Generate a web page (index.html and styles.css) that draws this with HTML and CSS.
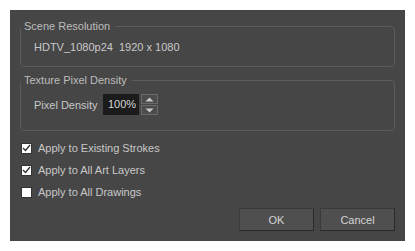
FILE: index.html
```html
<!DOCTYPE html>
<html lang="en">
<head>
  <meta charset="UTF-8" />
  <title>Texture Pixel Density</title>
  <link rel="stylesheet" href="styles.css">
</head>
<body>

  <div class="dialog">
    <fieldset class="group res-group">
      <legend>Scene Resolution</legend>
      <div class="res-value">HDTV_1080p24&nbsp;&nbsp;1920 x 1080</div>
    </fieldset>

    <fieldset class="group density-group">
      <legend>Texture Pixel Density</legend>
      <div class="density-row">
        <span class="density-label">Pixel Density</span>
        <span class="spin-input">100%</span>
        <span class="spin-buttons">
          <span class="spin-btn">
            <svg width="9" height="5" viewBox="0 0 9 5"><polygon points="0.5,4.5 4.5,0.5 8.5,4.5" fill="#c8c8c8"/></svg>
          </span>
          <span class="spin-btn">
            <svg width="9" height="5" viewBox="0 0 9 5"><polygon points="0.5,0.5 8.5,0.5 4.5,4.5" fill="#c8c8c8"/></svg>
          </span>
        </span>
      </div>
    </fieldset>

    <div class="options">
      <label class="check-row">
        <span class="check-box">
          <svg width="9" height="8" viewBox="0 0 9 8"><polyline points="1,4 3.5,6.5 8,1" fill="none" stroke="#2a2a2a" stroke-width="1.2"/></svg>
        </span>
        Apply to Existing Strokes
      </label>
      <label class="check-row">
        <span class="check-box">
          <svg width="9" height="8" viewBox="0 0 9 8"><polyline points="1,4 3.5,6.5 8,1" fill="none" stroke="#2a2a2a" stroke-width="1.2"/></svg>
        </span>
        Apply to All Art Layers
      </label>
      <label class="check-row">
        <span class="check-box"></span>
        Apply to All Drawings
      </label>
    </div>

    <div class="actions">
      <button type="button">OK</button>
      <button type="button">Cancel</button>
    </div>
  </div>

</body>
</html>
```

FILE: styles.css
```css
body {
  margin: 0;
  padding: 10px;
  background-color: #ffffff;
  font-family: "Liberation Sans", Arial, sans-serif;
  font-size: 11px;
}

.dialog {
  width: 395px;
  height: 231px;
  box-sizing: border-box;
  background-color: #464646;
  color: #c4c4c4;
  padding: 10px 10px 10px 10px;
  display: flex;
  flex-direction: column;
}

.group {
  margin: 0;
  border: 1px solid #5b5b5b;
  border-radius: 4px;
  min-width: 0;
}

.group legend {
  padding: 0 5px 0 3px;
  margin-left: -13px;
  line-height: 13px;
  color: #bdbdbd;
}

.res-group {
  padding: 8px 13px 12px 13px;
}

.res-value {
  line-height: 13px;
  color: #c8c8c8;
}

.density-group {
  margin-top: 7px;
  padding: 7px 13px 15px 13px;
}

.density-row {
  display: flex;
  align-items: center;
  height: 21px;
}

.density-label {
  width: 69px;
  white-space: nowrap;
  color: #c8c8c8;
}

.spin-input {
  width: 36px;
  height: 21px;
  box-sizing: border-box;
  background-color: #1b1b1b;
  color: #d6d6d6;
  padding-left: 5px;
  line-height: 21px;
}

.spin-buttons {
  display: flex;
  flex-direction: column;
  gap: 1px;
  margin-left: 2px;
}

.spin-btn {
  width: 17px;
  height: 10px;
  box-sizing: border-box;
  background-color: #4c4c4c;
  border: 1px solid #6a6a6a;
  display: flex;
  align-items: center;
  justify-content: center;
}

.options {
  margin-top: 6px;
  display: flex;
  flex-direction: column;
}

.check-row {
  display: flex;
  align-items: center;
  height: 22px;
  padding-left: 1px;
  color: #c8c8c8;
}

.check-box {
  width: 11px;
  height: 11px;
  box-sizing: border-box;
  background-color: #ffffff;
  border: 1px solid #333333;
  margin-right: 6px;
  display: flex;
  align-items: center;
  justify-content: center;
}

.actions {
  margin-top: auto;
  display: flex;
  justify-content: flex-end;
  gap: 6px;
}

.actions button {
  width: 75px;
  height: 23px;
  background-color: #4f4f4f;
  border: 1px solid #3a3a3a;
  border-right-color: #2a2a2a;
  border-bottom-color: #2a2a2a;
  color: #d4d4d4;
  font-family: inherit;
  font-size: 11px;
  padding: 0;
}
```
